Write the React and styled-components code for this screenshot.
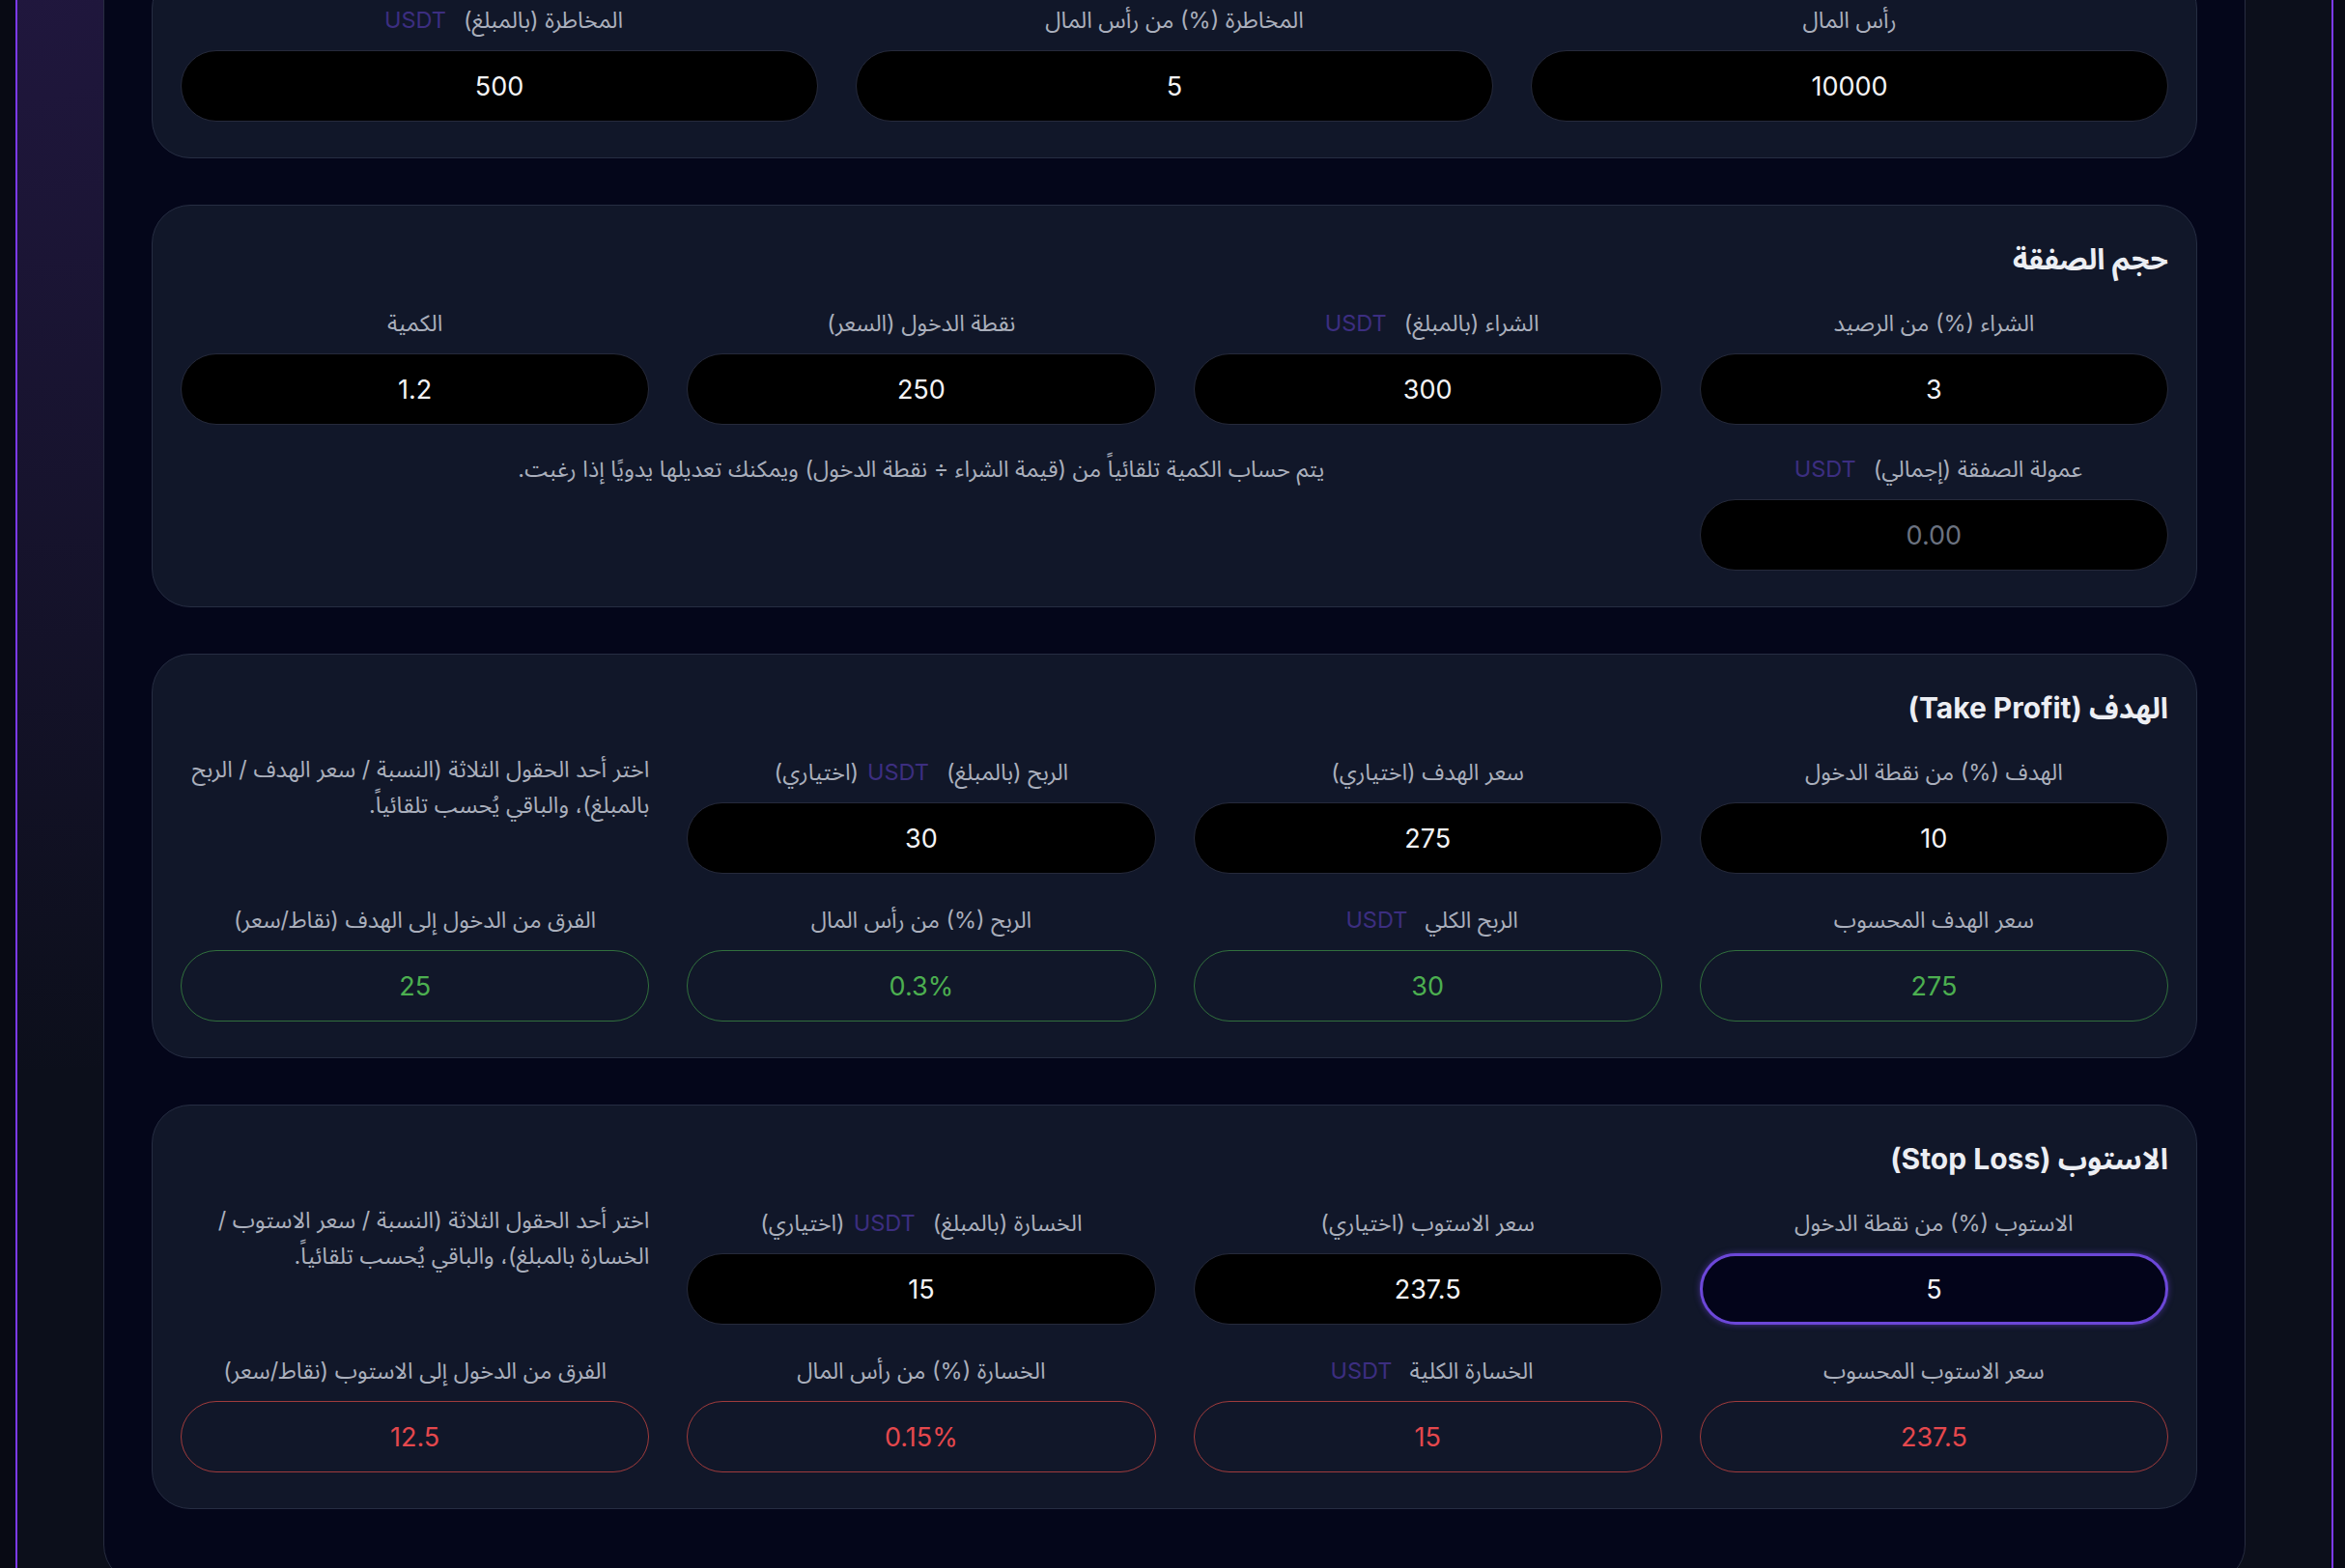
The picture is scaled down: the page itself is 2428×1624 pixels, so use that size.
import React from "react";
import styled, { createGlobalStyle, css } from "styled-components";

const GlobalStyle = createGlobalStyle`
  html, body {
    margin: 0;
    padding: 0;
    background: #080a14;
  }
  body {
    font-family: Inter, "Noto Sans Arabic", "DejaVu Sans", sans-serif;
    overflow: hidden;
  }
  * {
    box-sizing: border-box;
  }
`;

const riskFields = [
  { label: "رأس المال", value: "10000" },
  { label: "المخاطرة (%) من رأس المال", value: "5" },
  { label: "المخاطرة (بالمبلغ)", unit: true, value: "500" },
];

const sizeFields = [
  { label: "الشراء (%) من الرصيد", value: "3" },
  { label: "الشراء (بالمبلغ)", unit: true, value: "300" },
  { label: "نقطة الدخول (السعر)", value: "250" },
  { label: "الكمية", value: "1.2" },
];

const profitInputs = [
  { label: "الهدف (%) من نقطة الدخول", value: "10" },
  { label: "سعر الهدف (اختياري)", value: "275" },
  { label: "الربح (بالمبلغ)", unit: true, suffix: "(اختياري)", value: "30" },
];

const profitResults = [
  { label: "سعر الهدف المحسوب", value: "275" },
  { label: "الربح الكلي", unit: true, value: "30" },
  { label: "الربح (%) من رأس المال", value: "0.3%" },
  { label: "الفرق من الدخول إلى الهدف (نقاط/سعر)", value: "25" },
];

const stopInputs = [
  { label: "الاستوب (%) من نقطة الدخول", value: "5", tone: "focus" },
  { label: "سعر الاستوب (اختياري)", value: "237.5" },
  { label: "الخسارة (بالمبلغ)", unit: true, suffix: "(اختياري)", value: "15" },
];

const stopResults = [
  { label: "سعر الاستوب المحسوب", value: "237.5" },
  { label: "الخسارة الكلية", unit: true, value: "15" },
  { label: "الخسارة (%) من رأس المال", value: "0.15%" },
  { label: "الفرق من الدخول إلى الاستوب (نقاط/سعر)", value: "12.5" },
];

const Field = ({ label, unit, suffix, value, tone, placeholder }) => (
  <FieldBox>
    <Label>
      {label}
      {unit && <Unit>USDT</Unit>}
      {suffix}
    </Label>
    <Input
      readOnly
      defaultValue={value}
      placeholder={placeholder}
      $tone={tone}
    />
  </FieldBox>
);

const App = () => {
  return (
    <>
      <GlobalStyle />
      <Shell>
        <Panel>
          <Card>
            <Grid $cols={3}>
              {riskFields.map((f) => (
                <Field key={f.label} {...f} />
              ))}
            </Grid>
          </Card>

          <Card>
            <Title>حجم الصفقة</Title>
            <Grid $cols={4} $rowGap={30}>
              {sizeFields.map((f) => (
                <Field key={f.label} {...f} />
              ))}
              <Field label="عمولة الصفقة (إجمالي)" unit placeholder="0.00" />
              <Note>
                يتم حساب الكمية تلقائياً من (قيمة الشراء ÷ نقطة الدخول) ويمكنك
                تعديلها يدويًا إذا رغبت.
              </Note>
            </Grid>
          </Card>

          <Card>
            <Title>الهدف (Take Profit)</Title>
            <Grid $cols={4}>
              {profitInputs.map((f) => (
                <Field key={f.label} {...f} />
              ))}
              <Help>
                اختر أحد الحقول الثلاثة (النسبة / سعر الهدف / الربح بالمبلغ)،
                والباقي يُحسب تلقائياً.
              </Help>
              {profitResults.map((f) => (
                <Field key={f.label} {...f} tone="gain" />
              ))}
            </Grid>
          </Card>

          <Card>
            <Title>الاستوب (Stop Loss)</Title>
            <Grid $cols={4}>
              {stopInputs.map((f) => (
                <Field key={f.label} {...f} />
              ))}
              <Help>
                اختر أحد الحقول الثلاثة (النسبة / سعر الاستوب / الخسارة
                بالمبلغ)، والباقي يُحسب تلقائياً.
              </Help>
              {stopResults.map((f) => (
                <Field key={f.label} {...f} tone="loss" />
              ))}
            </Grid>
          </Card>
        </Panel>
      </Shell>
    </>
  );
};

export default App;

const Shell = styled.div`
  margin: -80px 12px 0 16px;
  min-height: 1800px;
  padding: 0 89px;
  border-left: 2px solid #7c3aed;
  border-right: 2px solid #7c3aed;
  background:
    radial-gradient(circle at 0 0, rgba(118, 56, 210, 0.2), transparent 1200px),
    #0c0f1b;
`;

const Panel = styled.main`
  direction: rtl;
  display: flex;
  flex-direction: column;
  gap: 48px;
  padding: 48px 49px 76px;
  background: #04061a;
  border: 1px solid #272c40;
  border-radius: 40px;
`;

const Card = styled.section`
  padding: 35px 29px 37px;
  background: #111729;
  border: 1px solid #262d42;
  border-radius: 40px;
`;

const Title = styled.h2`
  margin: 0 0 31px;
  font-size: 30px;
  line-height: 40px;
  font-weight: 700;
  color: #eceef3;
`;

const Grid = styled.div`
  display: grid;
  grid-template-columns: repeat(${(p) => p.$cols}, 1fr);
  column-gap: 39px;
  row-gap: ${(p) => p.$rowGap ?? 32}px;
  align-items: start;
`;

const FieldBox = styled.div`
  display: flex;
  flex-direction: column;
`;

const Label = styled.label`
  margin-bottom: 15px;
  font-size: 23.5px;
  line-height: 32px;
  color: #aaafbc;
  text-align: center;
  white-space: nowrap;
`;

const Unit = styled.span`
  margin-inline-start: 18px;
  margin-inline-end: 9px;
  font-family: Inter, sans-serif;
  color: #3c2e80;
`;

const Input = styled.input`
  width: 100%;
  height: 74px;
  padding: 0 20px;
  border-radius: 999px;
  background: #000;
  border: 1.5px solid #262a3b;
  color: #f4f4f6;
  font: 400 27px Inter, sans-serif;
  text-align: center;
  direction: ltr;
  outline: none;

  &::placeholder {
    color: #6b7280;
  }

  ${(p) =>
    p.$tone === "focus" &&
    css`
      border: 3px solid #6c47d8;
      background: #03041a;
      box-shadow: 0 0 6px rgba(108, 71, 216, 0.55);
    `}

  ${(p) =>
    p.$tone === "gain" &&
    css`
      background: transparent;
      border-color: #31703d;
      color: #4caf50;
    `}

  ${(p) =>
    p.$tone === "loss" &&
    css`
      background: transparent;
      border-color: #a03b3c;
      color: #e5484d;
    `}
`;

const Note = styled.p`
  grid-column: span 3;
  margin: 0;
  font-size: 23.5px;
  line-height: 32px;
  color: #aaafbc;
  text-align: center;
`;

const Help = styled.p`
  margin: -6px 0 0;
  font-size: 23.5px;
  line-height: 37px;
  color: #aaafbc;
  text-align: right;
`;
